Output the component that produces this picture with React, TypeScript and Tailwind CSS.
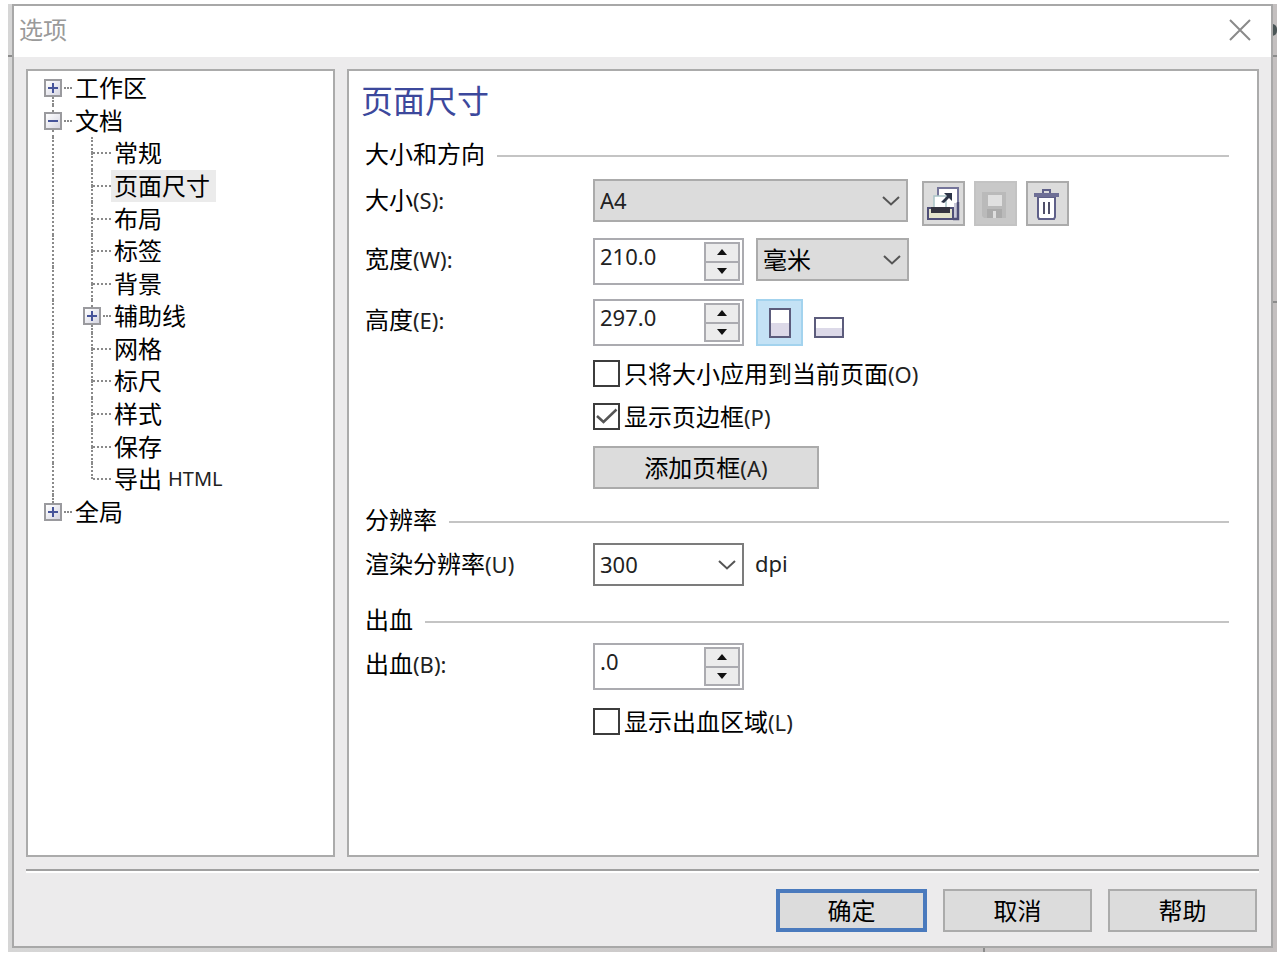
import React, { useState } from "react";

interface TreeNode {
  id: string;
  name: string;
  latin?: string;
  level: 0 | 1;
  expander?: "plus" | "minus";
  first?: boolean;
  last?: boolean;
}

const NODES: TreeNode[] = [
  { id: "workspace", name: "工作区", level: 0, expander: "plus", first: true },
  { id: "document", name: "文档", level: 0, expander: "minus" },
  { id: "general", name: "常规", level: 1 },
  { id: "page-size", name: "页面尺寸", level: 1 },
  { id: "layout", name: "布局", level: 1 },
  { id: "label", name: "标签", level: 1 },
  { id: "background", name: "背景", level: 1 },
  { id: "guidelines", name: "辅助线", level: 1, expander: "plus" },
  { id: "grid", name: "网格", level: 1 },
  { id: "rulers", name: "标尺", level: 1 },
  { id: "styles", name: "样式", level: 1 },
  { id: "save", name: "保存", level: 1 },
  { id: "export", name: "导出", latin: "HTML", level: 1, last: true },
  { id: "global", name: "全局", level: 0, expander: "plus", last: true },
];

function Expander({ kind, name }: { kind: "plus" | "minus"; name: string }) {
  return (
    <button
      type="button"
      aria-label={name}
      className="w-[18px] h-[18px] shrink-0 border-2 border-[#9a9a9e] bg-gradient-to-br from-white to-[#d6d6e2]"
    >
      <svg viewBox="0 0 14 14" className="w-full h-full" stroke="#46549a" strokeWidth="2">
        <path d={kind === "plus" ? "M2 7h10M7 2v10" : "M2 7h10"} />
      </svg>
    </button>
  );
}

// Dotted connector running through a row, broken by the expander when there is one
function Guide({ node, name }: { node: TreeNode; name: string }) {
  return (
    <span className="flex flex-col items-center w-[18px] shrink-0">
      <span className={`flex-1 border-l-2 border-dotted ${node.first ? "border-transparent" : "border-[#8a8a8a]"}`} />
      {node.expander && <Expander kind={node.expander} name={name} />}
      <span className={`flex-1 border-l-2 border-dotted ${node.last ? "border-transparent" : "border-[#8a8a8a]"}`} />
    </span>
  );
}

function TreeRow({ node, selected, onSelect }: { node: TreeNode; selected: boolean; onSelect: () => void }) {
  return (
    <li role="treeitem" aria-selected={selected} className="flex items-stretch pl-4">
      {node.level === 1 && (
        <span className="flex justify-center w-[18px] mr-[21px] shrink-0">
          <span className="border-l-2 border-dotted border-[#8a8a8a]" />
        </span>
      )}
      <Guide node={node} name={node.name} />
      <span
        className={`self-center border-t-2 border-dotted border-[#8a8a8a] ${
          node.expander ? "w-2 ml-[2px]" : "w-[18px] -ml-2"
        }`}
      />
      <button
        type="button"
        onClick={onSelect}
        className={`flex items-center px-[3px] text-2xl leading-8 whitespace-nowrap ${selected ? "bg-[#ebebeb] pr-[6px]" : ""}`}
      >
        {node.name}
        {node.latin && <span className="ml-[6px] text-xl text-[#222]">{node.latin}</span>}
      </button>
    </li>
  );
}

function Heading({ children }: { children: React.ReactNode }) {
  return (
    <div className="flex items-center gap-3 h-9">
      <h2 className="text-2xl whitespace-nowrap">{children}</h2>
      <span className="flex-1 mt-[3px] border-t-2 border-[#c4c4c4]" />
    </div>
  );
}

function Caption({ text, mnemonic }: { text: string; mnemonic: string }) {
  return (
    <>
      {text}
      <span className="text-[22px] text-[#222]">{mnemonic}</span>
    </>
  );
}

function Row({ id, text, mnemonic, children }: { id: string; text: string; mnemonic: string; children: React.ReactNode }) {
  return (
    <div className="flex items-start">
      <label htmlFor={id} className="w-[228px] shrink-0 text-2xl leading-[42px] whitespace-nowrap">
        <Caption text={text} mnemonic={mnemonic} />
      </label>
      {children}
    </div>
  );
}

function Combo({ id, label, value, className, boxClass }: {
  id: string;
  label?: string;
  value: string;
  className: string;
  boxClass: string;
}) {
  return (
    <div className={`relative ${className}`}>
      <select
        id={id}
        aria-label={label}
        defaultValue={value}
        className={`appearance-none w-full h-[43px] border-2 pl-[5px] pr-9 rounded-none outline-none ${boxClass}`}
      >
        <option>{value}</option>
      </select>
      <svg
        viewBox="0 0 18 10"
        className="absolute right-2 top-[17px] w-[18px] h-[10px] pointer-events-none"
        fill="none"
        stroke="#555"
        strokeWidth="2"
      >
        <path d="M1 1l8 7.500 8-7.500" />
      </svg>
    </div>
  );
}

function Spinner({ id, value }: { id: string; value: string }) {
  const [text, setText] = useState(value);
  const arrow = "flex flex-1 items-center justify-center bg-[#ececec]";
  return (
    <div className="flex w-[151px] h-[47px] border-2 border-[#ababb0] bg-white p-[2px]">
      <input
        id={id}
        type="text"
        value={text}
        onChange={(e) => setText(e.target.value)}
        className="flex-1 min-w-0 pl-[3px] pb-[10px] text-[22px] text-[#222] outline-none"
      />
      <div className="flex flex-col w-9 border-2 border-[#ababb0]">
        <button type="button" aria-label="增加" className={`${arrow} border-b-2 border-[#ababb0]`}>
          <svg viewBox="0 0 10 6" className="w-[10px] h-[6px]"><path d="M5 0l5 6H0z" fill="#111" /></svg>
        </button>
        <button type="button" aria-label="减少" className={arrow}>
          <svg viewBox="0 0 10 6" className="w-[10px] h-[6px]"><path d="M0 0h10L5 6z" fill="#111" /></svg>
        </button>
      </div>
    </div>
  );
}

function Check({ id, text, mnemonic, checked = false }: { id: string; text: string; mnemonic: string; checked?: boolean }) {
  const [on, setOn] = useState(checked);
  return (
    <div className="flex items-center h-[27px] ml-[228px]">
      <span className="relative w-[27px] h-[27px] shrink-0">
        <input
          id={id}
          type="checkbox"
          checked={on}
          onChange={() => setOn(!on)}
          className="appearance-none block w-[27px] h-[27px] border-2 border-[#3c3c3c] bg-white"
        />
        {on && (
          <svg
            viewBox="0 0 27 27"
            className="absolute inset-0 pointer-events-none"
            fill="none"
            stroke="#555"
            strokeWidth="2.500"
          >
            <path d="M4 13l6.500 6L23.500 6.500" />
          </svg>
        )}
      </span>
      <label htmlFor={id} className="pl-1 text-2xl leading-[27px] whitespace-nowrap">
        <Caption text={text} mnemonic={mnemonic} />
      </label>
    </div>
  );
}

function ImportIcon() {
  return (
    <svg viewBox="0 0 39 41" className="w-[39px] h-[41px]">
      <path d="M14 5h20v30H14z" fill="#fff" />
      <path d="M30 20h4v15h-4z" fill="#c9c8d8" />
      <path d="M14 14V5h20v15" fill="none" stroke="#75759a" strokeWidth="2" />
      <path d="M34 19v17h-5" fill="none" stroke="#4f4f78" strokeWidth="2.500" />
      <path d="M10 13h12v13H10z" fill="#fff" stroke="#a9c3c6" strokeWidth="1.500" />
      <path d="M17 19l6-6-3-3h8v8l-3-3-5 5z" fill="#2c3447" />
      <path d="M4 25h25v11H4z" fill="#e3e3cb" stroke="#4f4f78" strokeWidth="2" />
      <path d="M7 24h19v6H7z" fill="#33333f" />
    </svg>
  );
}

function SaveIcon() {
  return (
    <svg viewBox="0 0 39 41" className="w-[39px] h-[41px]">
      <path d="M6 9h24v26H8l-2-2z" fill="#bababa" />
      <path d="M12 12h14v11H12z" fill="#e0e0e0" />
      <path d="M11 26h15v9H11z" fill="#ababab" />
      <path d="M17 28h3v7h-3z" fill="#dedede" />
    </svg>
  );
}

function TrashIcon() {
  return (
    <svg viewBox="0 0 39 41" className="w-[39px] h-[41px]" fill="none" stroke="#5f6089" strokeWidth="2">
      <path d="M10 14h17v20l-1 2H11l-1-2z" fill="#fff" />
      <path d="M6 12h25" stroke="#6e6f96" strokeWidth="4" />
      <path d="M15 10V7h7v3" />
      <path d="M16 19v12M21 19v12" stroke="#50506a" />
    </svg>
  );
}

export default function App() {
  const [selected, setSelected] = useState("page-size");
  const [portrait, setPortrait] = useState(true);
  const iconButton = "flex items-center justify-center w-[43px] h-[45px] mt-[2px] border-2";
  const footerButton = "w-[149px] h-[43px] text-2xl";

  return (
    <div className="flex min-h-screen bg-white pt-1 pr-[3px] pb-1 pl-2 text-black font-['Noto_Sans','Noto_Sans_CJK_SC',sans-serif]">
      <div className="relative flex flex-1 pl-1 pr-1 pb-1 bg-gradient-to-r from-[#d6d6d6] to-[#c4c0c0]">
        {/* slivers of the window behind */}
        <span className="absolute left-0 top-[51px] w-1 h-[2px] bg-[#8c8c8c]" />
        <span className="absolute right-0 top-[20px] w-[5px] h-3 rounded-r-full bg-[#4a5556]" />
        <span className="absolute right-0 top-[51px] w-1 h-[2px] bg-[#8c8c8c]" />
        <span className="absolute right-0 top-[297px] w-1 h-[2px] bg-[#8c8c8c]" />
        <span className="absolute right-[292px] bottom-0 w-[2px] h-1 bg-[#8c8c8c]" />

        <main className="relative flex flex-1 flex-col border-2 border-[#a8a8a8] bg-[#ecebec]">
          <header className="flex items-center justify-between h-[51px] pl-[5px] pr-5 pb-1 bg-white">
            <h1 className="text-2xl text-[#9a9a9a]">选项</h1>
            <button type="button" aria-label="关闭">
              <svg viewBox="0 0 22 22" className="w-[22px] h-[22px]" stroke="#8a8a8a" strokeWidth="2">
                <path d="M1 1l20 20M21 1L1 21" />
              </svg>
            </button>
          </header>

          <div className="flex flex-1 gap-3 pt-3 px-3">
            <nav className="w-[309px] shrink-0 border-2 border-[#ababab] bg-white pt-px">
              <ul role="tree" className="grid auto-rows-fr h-[456px]">
                {NODES.map((node) => (
                  <TreeRow
                    key={node.id}
                    node={node}
                    selected={selected === node.id}
                    onSelect={() => setSelected(node.id)}
                  />
                ))}
              </ul>
            </nav>

            <form className="flex-1 min-w-0 border-2 border-[#ababab] bg-white pt-[6px] pl-4 pr-7" onSubmit={(e) => e.preventDefault()}>
              <h2 className="-ml-1 text-[32px] leading-[48px] text-[#3c489c]">页面尺寸</h2>

              <section className="mt-[11px]">
                <Heading>大小和方向</Heading>
                <div className="mt-[7px]">
                  <Row id="size" text="大小" mnemonic="(S):">
                    <Combo id="size" value="A4" className="w-[315px]" boxClass="text-[22px] text-[#222] bg-[#dcdcdc] border-[#ababab]" />
                    <div className="flex gap-[9px] ml-[14px]">
                      <button type="button" aria-label="从打印机获取页面尺寸" className={`${iconButton} border-[#ababab] bg-[#dcdcdc]`}>
                        <ImportIcon />
                      </button>
                      <button type="button" aria-label="保存自定义页面" disabled className={`${iconButton} border-[#c3c3c3] bg-[#c8c8c8]`}>
                        <SaveIcon />
                      </button>
                      <button type="button" aria-label="删除自定义页面" className={`${iconButton} border-[#ababab] bg-[#dcdcdc]`}>
                        <TrashIcon />
                      </button>
                    </div>
                  </Row>
                </div>
                <div className="mt-3">
                  <Row id="width" text="宽度" mnemonic="(W):">
                    <Spinner id="width" value="210.0" />
                    <Combo id="unit" label="单位" value="毫米" className="w-[153px] ml-3" boxClass="text-2xl bg-[#dcdcdc] border-[#ababab]" />
                  </Row>
                </div>
                <div className="mt-[14px]">
                  <Row id="height" text="高度" mnemonic="(E):">
                    <Spinner id="height" value="297.0" />
                    <button
                      type="button"
                      aria-label="纵向"
                      aria-pressed={portrait}
                      onClick={() => setPortrait(true)}
                      className={`flex items-center justify-center w-[47px] h-[47px] ml-3 border-2 ${
                        portrait ? "border-[#a3d3ee] bg-[#c4e2f5]" : "border-transparent"
                      }`}
                    >
                      <svg viewBox="0 0 22 30" className="w-[22px] h-[30px]">
                        <path d="M1 1h20v28H1z" fill="#fff" />
                        <path d="M1 15h20v14H1z" fill="#dcd9e8" />
                        <path d="M1 1h20v28H1z" fill="none" stroke="#5c5c7c" strokeWidth="2" />
                      </svg>
                    </button>
                    <button
                      type="button"
                      aria-label="横向"
                      aria-pressed={!portrait}
                      onClick={() => setPortrait(false)}
                      className={`flex items-end justify-center w-[47px] h-[47px] ml-[2px] pb-[6px] border-2 ${
                        portrait ? "border-transparent" : "border-[#a3d3ee] bg-[#c4e2f5]"
                      }`}
                    >
                      <svg viewBox="0 0 30 21" className="w-[30px] h-[21px]">
                        <path d="M1 1h28v19H1z" fill="#fff" />
                        <path d="M1 11h28v9H1z" fill="#dcd9e8" />
                        <path d="M1 1h28v19H1z" fill="none" stroke="#5c5c7c" strokeWidth="2" />
                      </svg>
                    </button>
                  </Row>
                </div>
                <div className="flex flex-col gap-4 mt-[14px]">
                  <Check id="current-only" text="只将大小应用到当前页面" mnemonic="(O)" />
                  <Check id="show-border" text="显示页边框" mnemonic="(P)" checked />
                  <button type="button" className="w-[226px] h-[43px] ml-[228px] border-2 border-[#ababab] bg-[#dcdcdc] text-2xl">
                    <Caption text="添加页框" mnemonic="(A)" />
                  </button>
                </div>
              </section>

              <section className="mt-[13px]">
                <Heading>分辨率</Heading>
                <div className="mt-[5px]">
                  <Row id="resolution" text="渲染分辨率" mnemonic="(U)">
                    <Combo id="resolution" value="300" className="w-[151px]" boxClass="text-[22px] text-[#222] bg-white border-[#7c7c7c]" />
                    <span className="ml-[11px] text-[22px] leading-10 text-[#222]">dpi</span>
                  </Row>
                </div>
              </section>

              <section className="mt-4">
                <Heading>出血</Heading>
                <div className="mt-[5px]">
                  <Row id="bleed" text="出血" mnemonic="(B):">
                    <Spinner id="bleed" value=".0" />
                  </Row>
                </div>
                <div className="mt-[18px]">
                  <Check id="show-bleed" text="显示出血区域" mnemonic="(L)" />
                </div>
              </section>
            </form>
          </div>

          <div className="mx-3 mt-3 border-t-2 border-[#a0a0a0] h-1 bg-white" />

          <footer className="flex justify-end gap-4 pt-4 pb-[14px] pr-[14px]">
            <button type="button" className="w-[151px] h-[43px] text-2xl border-4 border-[#4a7abd] bg-[#dcdcdc]">确定</button>
            <button type="button" className={`${footerButton} border-2 border-[#ababab] bg-[#dcdcdc]`}>取消</button>
            <button type="button" className={`${footerButton} border-2 border-[#ababab] bg-[#dcdcdc]`}>帮助</button>
          </footer>
        </main>
      </div>
    </div>
  );
}
